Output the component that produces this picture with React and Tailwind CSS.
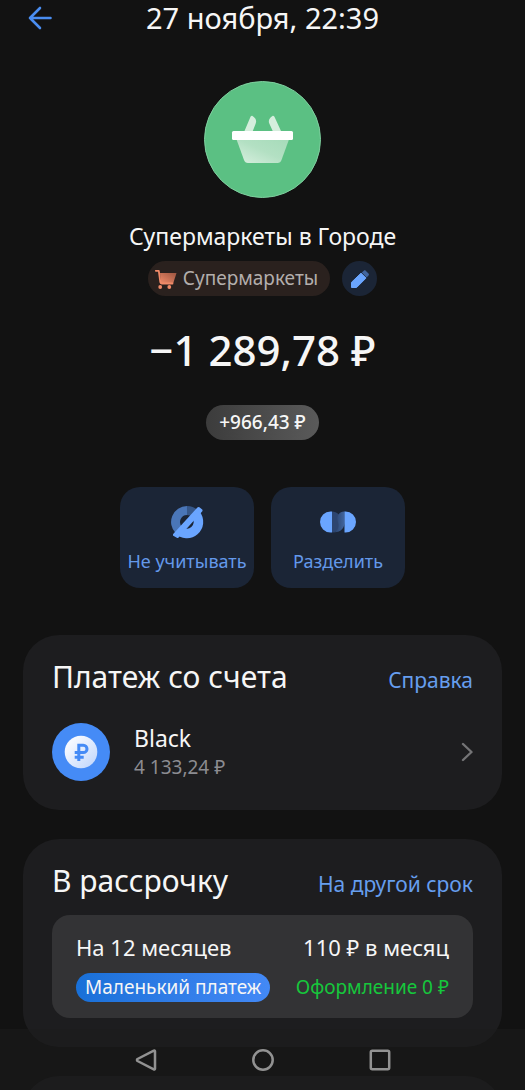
import { useId } from "react";

function BackArrow() {
  return (
    <svg viewBox="0 0 24 24" className="size-6" fill="none" stroke="#4a8df0" strokeWidth="2.6" strokeLinecap="round" strokeLinejoin="round" aria-hidden="true">
      <path d="M22.5 12H2M12 2 2 12l10 10" />
    </svg>
  );
}

function BasketLogo() {
  const id = useId();
  return (
    <svg viewBox="0 0 117 117" className="size-[117px]" aria-hidden="true">
      <defs>
        <linearGradient id={id} x1="1" y1="0" x2="0" y2="1">
          <stop offset="0" stopColor="#a5dbb9" />
          <stop offset="0.5" stopColor="#b3e0c3" />
          <stop offset="1" stopColor="#d9f0e0" />
        </linearGradient>
      </defs>
      <circle cx="58.5" cy="58.5" r="58" fill="#5bc083" stroke="#7fcf9f" />
      <path d="M40.500 50 46.200 36.500c.5-1.400 1.400-2.300 2.300-1.600 3 1.800 4.400 4.600 3.200 7.600L48.800 50Z" fill="#d5eedd" />
      <path d="M77 50 70.800 36.500c-.6-1.400-1.400-2.300-2.300-1.600-3 1.800-4.400 4.600-3.200 7.600L68.700 50Z" fill="#d5eedd" />
      <path d="M32 57h53.500l-8 22c-.8 2-1.800 3-4 3H44c-2.200 0-3.200-1-4-3Z" fill={`url(#${id})`} />
      <rect x="28" y="50" width="61" height="9" rx="1.500" fill="#fff" />
    </svg>
  );
}

function CartIcon() {
  const id = useId();
  return (
    <svg viewBox="0 0 22 20" className="h-5 w-[22px] shrink-0" aria-hidden="true">
      <defs>
        <linearGradient id={id} x1="0" y1="1" x2="1" y2="0">
          <stop offset="0" stopColor="#f08a68" />
          <stop offset="1" stopColor="#9c5540" />
        </linearGradient>
      </defs>
      <path d="M5 4h16.500l-3.200 10H6Z" fill={`url(#${id})`} />
      <path d="M.8 1.800h3l1.500 11.400c.1.800.6 1.300 1.400 1.300h10.800" fill="none" stroke="#f08a68" strokeWidth="1.800" strokeLinecap="round" strokeLinejoin="round" />
      <circle cx="5.200" cy="18" r="1.900" fill="#f08a68" />
      <circle cx="14.300" cy="18" r="1.900" fill="#f08a68" />
    </svg>
  );
}

function PencilIcon() {
  return (
    <svg viewBox="0 0 20 20" className="size-5" aria-hidden="true">
      <path d="M1.500 18.500v-5.200L11 4.200l5 4.900L6.600 18.500Z" fill="#6aa5ff" stroke="#6aa5ff" strokeLinejoin="round" />
      <path d="m11.800 3.600 2-1.900c.6-.6 1.300-.6 1.900 0l2.800 2.800c.6.600.6 1.300 0 1.900l-1.900 2Z" fill="#41659f" />
    </svg>
  );
}

function ExcludeIcon() {
  return (
    <svg viewBox="0 0 34 34" className="size-[34px]" aria-hidden="true">
      <path d="M17 5.500A11.500 11.500 0 0 0 8.900 25.100" fill="none" stroke="#4a76b8" strokeWidth="9" />
      <path d="M17 5.500a11.500 11.500 0 0 1 8.100 3.400" fill="none" stroke="#365789" strokeWidth="9" />
      <path d="M26 9.800A11.500 11.500 0 0 1 8.500 24.700" fill="none" stroke="#6aa5ff" strokeWidth="9.500" />
      <path d="M4.500 29.800 28.500 3.500l2.500 2L7.500 31.500Z" fill="#6aa5ff" stroke="#6aa5ff" strokeWidth="3" strokeLinejoin="round" />
    </svg>
  );
}

function SplitIcon() {
  const id = useId();
  return (
    <svg viewBox="0 0 36 22" className="h-[22px] w-9" aria-hidden="true">
      <defs>
        <linearGradient id={id} x1="0" y1="0" x2="1" y2="0">
          <stop offset="0" stopColor="#253a5d" />
          <stop offset="1" stopColor="#41659f" />
        </linearGradient>
      </defs>
      <path d="M12 .5c5 0 9 3.500 9 10.500s-4 10.500-9 10.500Z" fill="#2d4570" />
      <path d="M24.500.5C19 .5 16 5 18 11s-1.500 10.500-6 10.500c10 0 12.500-5 12.500-10.500Z" fill={`url(#${id})`} />
      <path d="M12 .5h-1.500a10.500 10.500 0 0 0 0 21H12ZM24.500.5h1a10.500 10.500 0 0 1 0 21h-1Z" fill="#6aa5ff" />
    </svg>
  );
}

function AccountIcon() {
  const id = useId();
  return (
    <svg viewBox="0 0 58 58" className="size-[58px] shrink-0" aria-hidden="true">
      <defs>
        <linearGradient id={id} x1="0" y1="0" x2="1" y2="1">
          <stop offset="0.2" stopColor="#f6f9ff" />
          <stop offset="1" stopColor="#bdd4fb" />
        </linearGradient>
      </defs>
      <circle cx="29" cy="29" r="29" fill="#458bf6" />
      <circle cx="29" cy="29" r="16.300" fill={`url(#${id})`} />
      <path d="M26.800 38V22.200h4.500a3.700 3.700 0 0 1 0 7.400h-8.600M22.700 34.200h9" fill="none" stroke="#458bf6" strokeWidth="3" />
    </svg>
  );
}

function ActionButton({ icon, label }) {
  return (
    <button type="button" className="flex h-[101px] w-[134px] flex-col items-center gap-2 rounded-[20px] bg-[#1b2536] pt-[18px] text-[18px] leading-7 text-[#6499ea]">
      <span className="flex h-[34px] items-center">{icon}</span>
      <span className="whitespace-nowrap">{label}</span>
    </button>
  );
}

function Card({ title, link, children }) {
  return (
    <section className="rounded-[36px] bg-[#1d1d1f] px-[29px] pt-5 pb-[29px]">
      <div className="flex h-11 items-baseline justify-between">
        <h2 className="text-[30px] leading-11">{title}</h2>
        <a href="#" className="text-[21px] text-[#669eee]">{link}</a>
      </div>
      {children}
    </section>
  );
}

export default function App() {
  return (
    <div className="relative h-screen overflow-hidden bg-[#121212] font-['Noto_Sans',sans-serif] text-[#f6f6f6]">
      <header className="grid h-9 grid-cols-[24px_1fr_24px] items-center px-7">
        <button type="button" aria-label="Назад"><BackArrow /></button>
        <h1 className="text-center text-[29px] leading-9">27 ноября, 22:39</h1>
      </header>

      <main>
        <div className="flex flex-col items-center pt-[45px]">
          <BasketLogo />
          <p className="mt-5 text-[23px] leading-9">Супермаркеты в Городе</p>
          <div className="mt-[7px] flex gap-3">
            <span className="flex h-[35px] items-center gap-1.5 rounded-full bg-[#2a211e] pr-3 pl-[7px] text-[19px] text-[#b3aeac]">
              <CartIcon />
              Супермаркеты
            </span>
            <button type="button" aria-label="Изменить категорию" className="flex size-[35px] items-center justify-center rounded-full bg-[#1b2536]">
              <PencilIcon />
            </button>
          </div>
          <p className="mt-6 text-[42px] leading-[60px] font-medium">−1 289,78 ₽</p>
          <span className="mt-[25px] flex h-[35px] items-center rounded-full bg-linear-to-r from-[#3c3c3c] to-[#5a5a5a] px-[13px] text-[19px] font-medium">
            +966,43 ₽
          </span>
          <div className="mt-[47px] flex gap-[17px]">
            <ActionButton icon={<ExcludeIcon />} label="Не учитывать" />
            <ActionButton icon={<SplitIcon />} label="Разделить" />
          </div>
        </div>

        <div className="mt-[47px] flex flex-col gap-[29px] px-[23px]">
          <Card title="Платеж со счета" link="Справка">
            <button type="button" className="mt-6 flex w-full items-center text-left">
              <AccountIcon />
              <span className="ml-6 flex flex-1 flex-col">
                <span className="text-[23px] leading-[30px]">Black</span>
                <span className="text-[19px] leading-7 text-[#8c8c91]">4 133,24 ₽</span>
              </span>
              <svg viewBox="0 0 12 20" className="h-5 w-3" fill="none" stroke="#747476" strokeWidth="2.400" strokeLinecap="round" strokeLinejoin="round" aria-hidden="true">
                <path d="m2 2 8.500 8L2 18" />
              </svg>
            </button>
          </Card>

          <Card title="В рассрочку" link="На другой срок">
            <div className="mt-3 rounded-[18px] bg-[#333335] px-6 pt-[14px] pb-4">
              <div className="flex justify-between text-[22px] leading-9">
                <span>На 12 месяцев</span>
                <span>110 ₽ в месяц</span>
              </div>
              <div className="mt-2 flex items-center justify-between text-[19px] leading-[29px]">
                <span className="rounded-full bg-linear-to-r from-[#1870d8] to-[#4389f6] px-[9px]">Маленький платеж</span>
                <span className="text-[#16c73c]">Оформление 0 ₽</span>
              </div>
            </div>
          </Card>

          <div className="h-24 rounded-[36px] bg-[#1d1d1f]" />
        </div>
      </main>

      <nav className="absolute inset-x-0 bottom-0 flex h-[61px] items-center justify-center gap-[93px] bg-[#1c1c1c]/50">
        <button type="button" aria-label="Назад">
          <svg viewBox="0 0 24 24" className="size-6" fill="none" stroke="#929292" strokeWidth="2.500" strokeLinejoin="round" aria-hidden="true">
            <path d="M21 3.300v17.400a.8.800 0 0 1-1.200.7L3.500 13a1.200 1.200 0 0 1 0-2L19.800 2.600a.8.800 0 0 1 1.200.7Z" />
          </svg>
        </button>
        <button type="button" aria-label="Домой">
          <svg viewBox="0 0 24 24" className="size-6" fill="none" stroke="#929292" strokeWidth="2.500" aria-hidden="true">
            <circle cx="12" cy="12" r="9.700" />
          </svg>
        </button>
        <button type="button" aria-label="Недавние приложения">
          <svg viewBox="0 0 24 24" className="size-6" fill="none" stroke="#929292" strokeWidth="2.500" aria-hidden="true">
            <rect x="2.800" y="2.800" width="18.400" height="18.400" rx="1.500" />
          </svg>
        </button>
      </nav>
    </div>
  );
}
